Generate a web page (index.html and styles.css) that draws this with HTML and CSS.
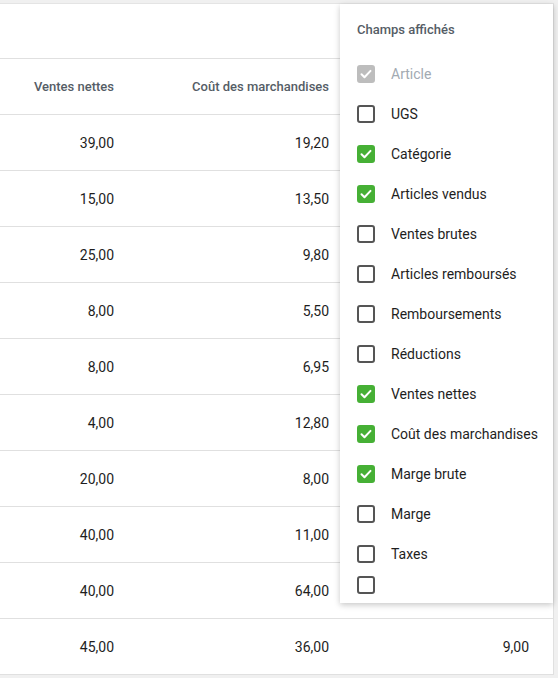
FILE: index.html
```html
<!DOCTYPE html>
<html lang="fr">
<head>
<meta charset="utf-8">
<title>Rapport</title>
<link rel="stylesheet" href="styles.css">
</head>
<body>
<div class="card">
  <div class="card-head"></div>
  <div class="table">
    <div class="row head">
      <div class="cell">Ventes nettes</div>
      <div class="cell">Coût des marchandises</div>
      <div class="cell"></div>
    </div>
    <div class="row"><div class="cell">39,00</div><div class="cell">19,20</div><div class="cell"></div></div>
    <div class="row"><div class="cell">15,00</div><div class="cell">13,50</div><div class="cell"></div></div>
    <div class="row"><div class="cell">25,00</div><div class="cell">9,80</div><div class="cell"></div></div>
    <div class="row"><div class="cell">8,00</div><div class="cell">5,50</div><div class="cell"></div></div>
    <div class="row"><div class="cell">8,00</div><div class="cell">6,95</div><div class="cell"></div></div>
    <div class="row"><div class="cell">4,00</div><div class="cell">12,80</div><div class="cell"></div></div>
    <div class="row"><div class="cell">20,00</div><div class="cell">8,00</div><div class="cell"></div></div>
    <div class="row"><div class="cell">40,00</div><div class="cell">11,00</div><div class="cell"></div></div>
    <div class="row"><div class="cell">40,00</div><div class="cell">64,00</div><div class="cell"></div></div>
    <div class="row"><div class="cell">45,00</div><div class="cell">36,00</div><div class="cell">9,00</div></div>
  </div>
</div>

<div class="popover">
  <div class="pop-title">Champs affichés</div>
  <ul class="fields">
    <li class="field disabled"><span class="box checked"><svg viewBox="0 0 18 18"><path d="M4.5 9.3l3 3 6-6.4"/></svg></span><span class="label">Article</span></li>
    <li class="field"><span class="box"></span><span class="label">UGS</span></li>
    <li class="field"><span class="box checked"><svg viewBox="0 0 18 18"><path d="M4.5 9.3l3 3 6-6.4"/></svg></span><span class="label">Catégorie</span></li>
    <li class="field"><span class="box checked"><svg viewBox="0 0 18 18"><path d="M4.5 9.3l3 3 6-6.4"/></svg></span><span class="label">Articles vendus</span></li>
    <li class="field"><span class="box"></span><span class="label">Ventes brutes</span></li>
    <li class="field"><span class="box"></span><span class="label">Articles remboursés</span></li>
    <li class="field"><span class="box"></span><span class="label">Remboursements</span></li>
    <li class="field"><span class="box"></span><span class="label">Réductions</span></li>
    <li class="field"><span class="box checked"><svg viewBox="0 0 18 18"><path d="M4.5 9.3l3 3 6-6.4"/></svg></span><span class="label">Ventes nettes</span></li>
    <li class="field"><span class="box checked"><svg viewBox="0 0 18 18"><path d="M4.5 9.3l3 3 6-6.4"/></svg></span><span class="label">Coût des marchandises</span></li>
    <li class="field"><span class="box checked"><svg viewBox="0 0 18 18"><path d="M4.5 9.3l3 3 6-6.4"/></svg></span><span class="label">Marge brute</span></li>
    <li class="field"><span class="box"></span><span class="label">Marge</span></li>
    <li class="field"><span class="box"></span><span class="label">Taxes</span></li>
    <li class="field last"><span class="box"></span></li>
  </ul>
</div>
</body>
</html>
```

FILE: styles.css
```css
* { box-sizing: border-box; }

html, body {
  margin: 0;
  padding: 0;
}

body {
  background: #f0f0f0;
  font-family: Roboto, "Liberation Sans", sans-serif;
  color: #1e1e1e;
  width: 558px;
  height: 678px;
  overflow: hidden;
  position: relative;
}

.card {
  margin-top: 3px;
  width: 554px;
  background: #fff;
  border-right: 1px solid #e0e0e0;
  border-top: 1px solid #e4e4e4;
}

.card-head {
  height: 55px;
  border-bottom: 1px solid #e0e0e0;
}

.row {
  display: grid;
  grid-template-columns: 138px 215px 200px;
  height: 56px;
  border-bottom: 1px solid #e0e0e0;
  align-items: center;
  font-size: 14px;
}

.cell {
  text-align: right;
  padding-right: 24px;
  white-space: nowrap;
}

.row.head {
  font-size: 13px;
  font-weight: 500;
  color: #555d66;
}

.popover {
  position: absolute;
  top: 4px;
  left: 340px;
  width: 213px;
  height: 599px;
  background: #fff;
  box-shadow: 0 2px 6px rgba(0, 0, 0, 0.22);
  padding: 17px 0 0 17px;
  overflow: hidden;
}

.pop-title {
  font-size: 13px;
  font-weight: 500;
  color: #555d66;
  line-height: 18px;
  margin-bottom: 15px;
}

.fields {
  list-style: none;
  margin: 0;
  padding: 0;
}

.field {
  display: flex;
  align-items: center;
  height: 40px;
  font-size: 14px;
  color: #1e1e1e;
}

.field.last {
  height: 22px;
}

.box {
  width: 18px;
  height: 18px;
  border: 2px solid #555;
  border-radius: 3px;
  margin-right: 16px;
  flex: none;
  display: flex;
  align-items: center;
  justify-content: center;
}

.box.checked {
  background: #46b035;
  border-color: #46b035;
}

.box svg {
  width: 18px;
  height: 18px;
  fill: none;
  stroke: #fff;
  stroke-width: 2;
  stroke-linecap: round;
  stroke-linejoin: round;
  flex: none;
}

.field.disabled .box {
  background: #bdbdbd;
  border-color: #bdbdbd;
}

.field.disabled .label {
  color: #a2aab2;
}
```
